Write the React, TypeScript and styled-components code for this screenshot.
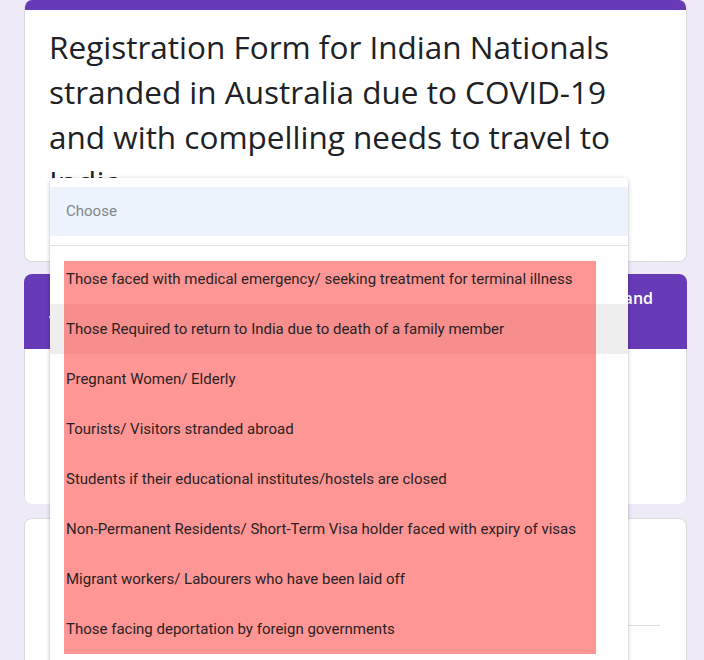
import React from "react";
import styled, { createGlobalStyle } from "styled-components";

const GlobalStyle = createGlobalStyle`
    html, body {
        margin: 0;
        padding: 0;
        background-color: #efeaf8;
        overflow: hidden;
    }
    #root {
        height: 660px;
    }
`

const options = [
    "Those faced with medical emergency/ seeking treatment for terminal illness",
    "Those Required to return to India due to death of a family member",
    "Pregnant Women/ Elderly",
    "Tourists/ Visitors stranded abroad",
    "Students if their educational institutes/hostels are closed",
    "Non-Permanent Residents/ Short-Term Visa holder faced with expiry of visas",
    "Migrant workers/ Labourers who have been laid off",
    "Those facing deportation by foreign governments",
];

// Google form page with the category dropdown opened
export default function App() {
    return (
        <>
            <GlobalStyle />
            <Page>
                <TitleCard>
                    <AccentBar />
                    <Title>
                        Registration Form for Indian Nationals stranded in Australia due to COVID-19 and with compelling needs to travel to India
                    </Title>
                </TitleCard>
                <SectionCard>
                    <SectionHeader>
                        Basic details of Indian National stranded in Australia seeking to travel and Visa/Passport details of the applicant
                    </SectionHeader>
                    <SectionBody />
                </SectionCard>
                <QuestionCard>
                    <AnswerLine />
                </QuestionCard>

                <Dropdown>
                    <Placeholder>Choose</Placeholder>
                    <Divider />
                    <OptionList>
                        {options.map((o, i) => (
                            <Option key={o} hover={i === 1}>
                                <OptionLabel>{o}</OptionLabel>
                            </Option>
                        ))}
                        <Highlight />
                    </OptionList>
                </Dropdown>
            </Page>
        </>
    );
}

const Page = styled.div`
    position: relative;
    width: 663px;
    padding: 0 17px 0 24px;
    display: flex;
    flex-direction: column;
`

const Card = styled.div`
    background-color: white;
    border: 1px solid #dadce0;
    border-radius: 8px;
    box-sizing: border-box;
    overflow: hidden;
`

const TitleCard = styled(Card)`
    height: 262px;
    border-top: none;
`

const AccentBar = styled.div`
    height: 10px;
    background-color: #673ab7;
`

const Title = styled.div`
    padding: 14px 40px 0 24px;
    font-family: "Open Sans", Lato, sans-serif;
    font-size: 31.5px;
    line-height: 45px;
    color: #202124;
`

const SectionCard = styled(Card)`
    margin-top: 12px;
    height: 230px;
    border: none;
`

const SectionHeader = styled.div`
    height: 75px;
    box-sizing: border-box;
    background-color: #673ab7;
    color: white;
    padding: 12px 34px 0 25px;
    font-family: "Open Sans", Lato, sans-serif;
    font-weight: 600;
    font-size: 16px;
    line-height: 24px;
    text-align: justify;
    overflow: hidden;
`

const SectionBody = styled.div`
    height: 155px;
    border: 1px solid #dadce0;
    border-top: none;
    border-radius: 0 0 8px 8px;
`

const QuestionCard = styled(Card)`
    margin-top: 14px;
    height: 200px;
    padding: 106px 26px 0 25px;
`

const AnswerLine = styled.div`
    height: 1px;
    background-color: #dadce0;
`

const Dropdown = styled.div`
    position: absolute;
    top: 178px;
    left: 50px;
    width: 578px;
    height: 520px;
    background-color: white;
    border-radius: 4px;
    box-shadow: 0 2px 2px rgba(0, 0, 0, .14), 0 3px 1px -2px rgba(0, 0, 0, .12), 0 1px 5px rgba(0, 0, 0, .2);
    padding-top: 9px;
    box-sizing: border-box;
    font-family: Roboto, Arial, sans-serif;
    font-size: 15px;
`

const Placeholder = styled.div`
    height: 49px;
    line-height: 49px;
    padding: 0 16px;
    background-color: #edf3fd;
    color: #80868b;
`

const Divider = styled.div`
    margin-top: 9px;
    height: 1px;
    background-color: #e2e2e2;
`

const OptionList = styled.div`
    position: relative;
    padding-top: 8px;
`

const Option = styled.div<{ hover?: boolean }>`
    height: 50px;
    line-height: 50px;
    padding: 0 16px;
    white-space: nowrap;
    background-color: ${p => p.hover ? "#eeeeee" : "transparent"};
`

const OptionLabel = styled.span`
    position: relative;
    z-index: 2;
    color: #2a2222;
`

const Highlight = styled.div`
    position: absolute;
    z-index: 1;
    top: 15px;
    left: 14px;
    width: 532px;
    height: 393px;
    background-color: rgba(255, 45, 45, .5);
    pointer-events: none;
`
